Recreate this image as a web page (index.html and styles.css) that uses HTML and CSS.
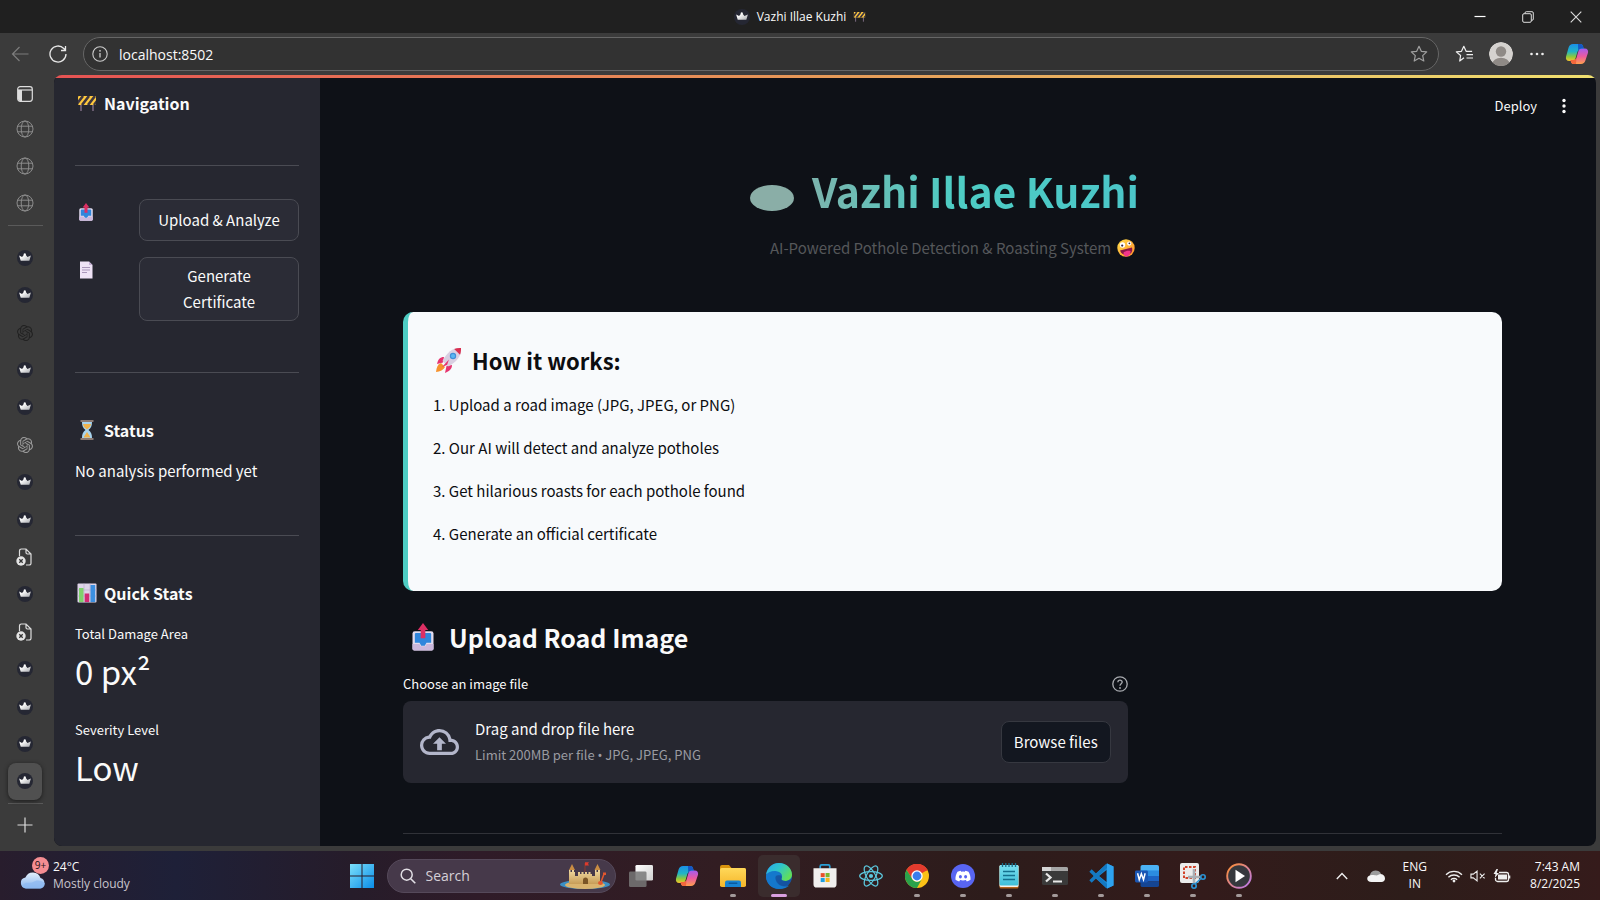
FILE: index.html
```html
<!DOCTYPE html>
<html lang="en">
<head>
<meta charset="utf-8">
<title>Vazhi Illae Kuzhi</title>
<link rel="stylesheet" href="styles.css">
</head>
<body>
<svg class="defs" aria-hidden="true">
  <defs>
    <linearGradient id="g-crown" x1="0" y1="0" x2="1" y2="1"><stop offset="0.3" stop-color="#fff"/><stop offset="1" stop-color="#a9abb0"/></linearGradient>
    <linearGradient id="g-copA" x1="0" y1="0" x2="0" y2="1"><stop offset="0" stop-color="#1a8fe8"/><stop offset="0.45" stop-color="#21b5c4"/><stop offset="0.75" stop-color="#8fc93a"/><stop offset="1" stop-color="#f5c52c"/></linearGradient>
    <linearGradient id="g-copB" x1="0" y1="0" x2="0" y2="1"><stop offset="0" stop-color="#a35cf0"/><stop offset="0.5" stop-color="#ea5aa0"/><stop offset="1" stop-color="#ffa04d"/></linearGradient>
    <linearGradient id="g-win" x1="0" y1="0" x2="1" y2="1"><stop offset="0" stop-color="#7ce0fb"/><stop offset="1" stop-color="#0a8de8"/></linearGradient>
    <linearGradient id="g-folder" x1="0" y1="0" x2="0" y2="1"><stop offset="0" stop-color="#ffd85a"/><stop offset="1" stop-color="#f5b62a"/></linearGradient>
    <linearGradient id="g-edgeA" x1="0" y1="0" x2="1" y2="0.6"><stop offset="0" stop-color="#2aa9ee"/><stop offset="0.5" stop-color="#2fc6c9"/><stop offset="1" stop-color="#62df58"/></linearGradient>
    <linearGradient id="g-edgeB" x1="0" y1="0" x2="1" y2="1"><stop offset="0" stop-color="#1b8fdf"/><stop offset="1" stop-color="#0f4fa0"/></linearGradient>
    <linearGradient id="g-media" x1="0" y1="0" x2="1" y2="1"><stop offset="0" stop-color="#ff8f2e"/><stop offset="1" stop-color="#b879f2"/></linearGradient>
    <linearGradient id="g-face" x1="0" y1="0" x2="1" y2="1"><stop offset="0" stop-color="#ffe04a"/><stop offset="1" stop-color="#ff8a2a"/></linearGradient>
    <linearGradient id="g-cloud" x1="0" y1="0" x2="0" y2="1"><stop offset="0" stop-color="#e3effc"/><stop offset="1" stop-color="#86b4ee"/></linearGradient>
    <linearGradient id="g-note" x1="0" y1="0" x2="0" y2="1"><stop offset="0" stop-color="#7adff0"/><stop offset="1" stop-color="#3fbfd8"/></linearGradient>
    <linearGradient id="g-task" x1="0" y1="0" x2="1" y2="1"><stop offset="0" stop-color="#fff"/><stop offset="1" stop-color="#cfcfcf"/></linearGradient>
    <linearGradient id="g-sand" x1="0" y1="0" x2="0" y2="1"><stop offset="0" stop-color="#f0d9a0"/><stop offset="1" stop-color="#c79d58"/></linearGradient>
    <clipPath id="c-board"><rect x="1" y="2" width="18" height="9" rx="1"/></clipPath>
    <clipPath id="c-avatar"><circle cx="12" cy="12" r="12"/></clipPath>
  </defs>
  <symbol id="i-crown" viewBox="0 0 18 18"><circle cx="9" cy="9" r="9" fill="#252733"/><path d="M2.4 6.2 5.7 8 7.6 5.6a1.3 1.3 0 1 1 2.3 0L11.8 8l3.8-1.8-1.7 6H4.2z" fill="url(#g-crown)"/></symbol>
  <symbol id="i-globe" viewBox="0 0 18 18"><g fill="none" stroke="#8c8c8c" stroke-width="1"><circle cx="9" cy="9" r="8"/><ellipse cx="9" cy="9" rx="3.8" ry="8"/><path d="M1.6 6.2h14.8M1.6 11.8h14.8"/></g></symbol>
  <symbol id="i-knot" viewBox="0 0 24 24"><path fill="currentColor" d="M22.2819 9.8211a5.9847 5.9847 0 0 0-.5157-4.9108 6.0462 6.0462 0 0 0-6.5098-2.9A6.0651 6.0651 0 0 0 4.9807 4.1818a5.9847 5.9847 0 0 0-3.9977 2.9 6.0462 6.0462 0 0 0 .7427 7.0966 5.98 5.98 0 0 0 .511 4.9107 6.051 6.051 0 0 0 6.5146 2.9001A5.9847 5.9847 0 0 0 13.2599 24a6.0557 6.0557 0 0 0 5.7718-4.2058 5.9894 5.9894 0 0 0 3.9977-2.9001 6.0557 6.0557 0 0 0-.7475-7.0729zm-9.022 12.6081a4.4755 4.4755 0 0 1-2.8764-1.0408l.1419-.0804 4.7783-2.7582a.7948.7948 0 0 0 .3927-.6813v-6.7369l2.02 1.1686a.071.071 0 0 1 .038.052v5.5826a4.504 4.504 0 0 1-4.4945 4.4944zm-9.6607-4.1254a4.4708 4.4708 0 0 1-.5346-3.0137l.142.0852 4.783 2.7582a.7712.7712 0 0 0 .7806 0l5.8428-3.3685v2.3324a.0804.0804 0 0 1-.0332.0615L9.74 19.9502a4.4992 4.4992 0 0 1-6.1408-1.6464zM2.3408 7.8956a4.485 4.485 0 0 1 2.3655-1.9728V11.6a.7664.7664 0 0 0 .3879.6765l5.8144 3.3543-2.0201 1.1685a.0757.0757 0 0 1-.071 0l-4.8303-2.7865A4.504 4.504 0 0 1 2.3408 7.872zm16.5963 3.8558L13.1038 8.364 15.1192 7.2a.0757.0757 0 0 1 .071 0l4.8303 2.7913a4.4944 4.4944 0 0 1-.6765 8.1042v-5.6772a.79.79 0 0 0-.407-.667zm2.0107-3.0231l-.142-.0852-4.7735-2.7818a.7759.7759 0 0 0-.7854 0L9.409 9.2297V6.8974a.0662.0662 0 0 1 .0284-.0615l4.8303-2.7866a4.4992 4.4992 0 0 1 6.6802 4.66zM8.3065 12.863l-2.02-1.1638a.0804.0804 0 0 1-.038-.0567V6.0742a4.4992 4.4992 0 0 1 7.3757-3.4537l-.142.0805L8.704 5.459a.7948.7948 0 0 0-.3927.6813zm1.0976-2.3654l2.602-1.4998 2.6069 1.4998v2.9994l-2.5974 1.4997-2.6067-1.4997Z"/></symbol>
  <symbol id="i-badfile" viewBox="0 0 18 18"><path d="M3.5 8V2.8A1.8 1.8 0 0 1 5.300 1H10l5 5v9.200A1.800 1.800 0 0 1 13.200 17H10M10 1v3.500A1.500 1.500 0 0 0 11.500 6H15" fill="none" stroke="#dedede" stroke-width="1.2"/><circle cx="5" cy="13" r="4.700" fill="#e4e4e4"/><path d="m3.300 11.300 3.400 3.400m0-3.400-3.400 3.400" stroke="#333" stroke-width="1.300"/></symbol>
  <symbol id="i-panel" viewBox="0 0 16 16"><rect x="0.700" y="0.700" width="14.600" height="14.600" rx="2.500" fill="none" stroke="#dedede" stroke-width="1.200"/><path d="M1 4h14" stroke="#dedede" stroke-width="1.200"/><path d="M1 4h4v11H3a2 2 0 0 1-2-2z" fill="#dedede"/></symbol>
  <symbol id="i-plus" viewBox="0 0 16 16"><path d="M8 .5v15M.5 8h15" stroke="#ddd" stroke-width="1.200"/></symbol>
  <symbol id="i-back" viewBox="0 0 18 18"><path d="M17.500 9H1.500M8.500 2l-7 7 7 7" fill="none" stroke="#7d7d7d" stroke-width="1.200"/></symbol>
  <symbol id="i-reload" viewBox="0 0 18 18"><path d="M17 9A8 8 0 1 1 14.800 3.500L16.500 5.300M16.500 1v4.500H12" fill="none" stroke="#e8e8e8" stroke-width="1.300"/></symbol>
  <symbol id="i-info" viewBox="0 0 16 16"><circle cx="8" cy="8" r="7.200" fill="none" stroke="#ccc" stroke-width="1.100"/><path d="M8 7v4.500" stroke="#ccc" stroke-width="1.300"/><circle cx="8" cy="4.800" r="0.900" fill="#ccc"/></symbol>
  <symbol id="i-star" viewBox="0 0 18 18"><path d="m9 1.300 2.300 5 5.400.6-4 3.700 1.100 5.400L9 13.300 4.200 16l1.100-5.400-4-3.700 5.400-.6z" fill="none" stroke="#a0a0a0" stroke-width="1.200" stroke-linejoin="round"/></symbol>
  <symbol id="i-favs" viewBox="0 0 18 18"><path d="M9 12.800 4.700 16l.9-5.500-4.300-3.600 5.200-.6L8.800 1.300l2.300 5h6M11.500 9.700H18M11.500 13H18" fill="none" stroke="#eee" stroke-width="1.200" stroke-linejoin="round"/></symbol>
  <symbol id="i-avatar" viewBox="0 0 24 24"><g clip-path="url(#c-avatar)"><circle cx="12" cy="12" r="12" fill="#d5d2cf"/><circle cx="12" cy="9.500" r="5.200" fill="#8f8a86"/><ellipse cx="12" cy="22" rx="8.500" ry="6.200" fill="#8f8a86"/></g></symbol>
  <symbol id="i-copilot" viewBox="0 0 24 24"><path d="M8 2h7.500c1.500 0 2.200 1 2.600 2.400L19 8h-4c-1.500 0-2.300.8-2.700 2.200L10.600 16c-.6 2-1.500 3-3.300 3H4.200C1.700 19 .5 17.300 1 14.700L3.600 5.500C4.300 3.200 5.700 2 8 2z" fill="url(#g-copA)"/><path d="M16 22H8.500c-1.500 0-2.200-1-2.600-2.400L5.500 18h3.300c1.500 0 2.300-.8 2.700-2.200L13.300 9.500c.6-2 1.700-3 3.500-3h3c2.500 0 3.700 1.700 3.200 4.300l-2.600 7.700C19.700 20.800 18.300 22 16 22z" fill="url(#g-copB)"/><path d="M13 2h2.500c1.500 0 2.200 1 2.600 2.400l.6 2.100h-2c-2 0-3 .8-3.500 2.800z" fill="#1657c4"/><path d="M5.500 18h3.300c1.500 0 2.300-.8 2.700-2.200L11 22H8.500c-1.500 0-2.200-1-2.600-2.400z" fill="#f4683c"/></symbol>
  <symbol id="i-barrier" viewBox="0 0 20 18"><path d="M4 9v8M16 9v8" stroke="#85728a" stroke-width="1.400"/><g clip-path="url(#c-board)"><rect x="1" y="2" width="18" height="9" fill="#ffc93d"/><path d="M-1 11 6 2M5 11l7-9M11 11l7-9M17 11l7-9" stroke="#3d3640" stroke-width="2.600"/></g></symbol>
  <symbol id="i-outbox" viewBox="0 0 20 24"><path d="M3 7h14a2 2 0 0 1 2 2v13a1.500 1.500 0 0 1-1.500 1.500h-15A1.500 1.500 0 0 1 1 22V9a2 2 0 0 1 2-2z" fill="#e2dcee"/><path d="M4 8.500h12a1 1 0 0 1 1 1V17h-4l-1.500 2.500h-3L7 17H3V9.500a1 1 0 0 1 1-1z" fill="#2f86dc"/><path d="M1 18h6l1 2h4l1-2h6v4a1.500 1.500 0 0 1-1.500 1.500h-15A1.500 1.500 0 0 1 1 22z" fill="#cbb8dc"/><path d="M10 0 5.500 6H8v7h4V6h2.500z" fill="#dc2f63"/></symbol>
  <symbol id="i-page" viewBox="0 0 14 18"><path d="M1 .5h9L13.500 4v13.500H1z" fill="#eee2f5"/><path d="M10 .5 13.500 4H10z" fill="#c4b0d4"/><path d="M3 6.500h8M3 9h8M3 11.500h5" stroke="#a996ba" stroke-width="1"/></symbol>
  <symbol id="i-glass" viewBox="0 0 16 20"><path d="M3 2h10c0 4-1 6-3.500 8C12 12 13 14 13 18H3c0-4 1-6 3.500-8C4 8 3 6 3 2z" fill="#a9d4ee"/><path d="M4 4h8c-.4 2.500-2 4-4 5.500C6 8 4.400 6.500 4 4zM8 12l3 4.500v1H5v-1z" fill="#f0b34d"/><path d="M1.500 1h13M1.500 19h13" stroke="#8c7a72" stroke-width="2"/></symbol>
  <symbol id="i-chart" viewBox="0 0 20 20"><rect x="0.500" y="0.500" width="19" height="19" rx="1" fill="#ded5e8"/><path d="M.5 7h19M.5 13h19M7 .5v19M13 .5v19" stroke="#baaacb" stroke-width="0.600"/><rect x="2" y="5" width="4.500" height="14" fill="#7fd26b"/><rect x="7.700" y="10.500" width="4.500" height="8.500" fill="#d22c73"/><rect x="13.500" y="2" width="4.700" height="17" fill="#3c8fe0"/></symbol>
  <symbol id="i-rocket" viewBox="0 0 26 26"><path d="M5 16c-3 1-4.500 4-5 9 4-.3 7.500-2 9-5z" fill="#f7922d"/><path d="M8 10c-4 0-6 2.500-7 7l6-1.500zM16 18c0 4-2.500 6-7 8l1.500-7z" fill="#e63470"/><path d="M25 1c-8-.5-14 4-18.500 13L12 19.500C21 15 25.500 9 25 1z" fill="#d9cfe2"/><path d="M25 1c-2.500-.2-4.700.2-6.800 1l5.800 5.800c.8-2.100 1.100-4.300 1-6.800z" fill="#d92f50"/><circle cx="17" cy="9" r="3.200" fill="#3f8fd8"/><circle cx="17" cy="9" r="2" fill="#5ab6f2"/><path d="M13 12.500 6 20l5-2z" fill="#e63470"/></symbol>
  <symbol id="i-zany" viewBox="0 0 18 18"><circle cx="9" cy="9" r="8.700" fill="url(#g-face)"/><circle cx="5.500" cy="6" r="2.700" fill="#fff"/><circle cx="5.200" cy="6.600" r="1.100" fill="#3a2740"/><circle cx="12.200" cy="4.600" r="2.100" fill="#fff"/><circle cx="12.400" cy="4.300" r="0.900" fill="#3a2740"/><path d="M3 11.500 15 8.500c1.200 4.500-1.700 7-4.500 7.500S4.500 15.500 3 11.500z" fill="#8a1648"/><path d="M6.500 13.500c2-1.700 5-2.300 7-1.500.2 3-1.500 5.300-3.800 5.600-1.900.1-3.200-1.600-3.200-4.100z" fill="#f2358a"/></symbol>
  <symbol id="i-upload" viewBox="0 0 24 16"><path d="M19.350 6.040A7.490 7.490 0 0 0 12 0C9.110 0 6.600 1.640 5.350 4.040A5.994 5.994 0 0 0 0 10c0 3.310 2.690 6 6 6h13c2.760 0 5-2.240 5-5 0-2.640-2.050-4.780-4.650-4.960zM19 14H6c-2.210 0-4-1.790-4-4s1.790-4 4-4h.71C7.370 3.690 9.480 2 12 2c3.040 0 5.500 2.460 5.500 5.500V8H19c1.660 0 3 1.340 3 3s-1.340 3-3 3zM8 9h2.550v4h2.900V9H16l-4-4z" fill="#b3b6ca"/></symbol>
  <symbol id="i-help" viewBox="0 0 16 16"><circle cx="8" cy="8" r="7.200" fill="none" stroke="#a9abb0" stroke-width="1.300"/><path d="M5.900 6.300c0-2.800 4.300-2.700 4.300-.2C10.200 7.800 8 7.800 8 9.800" fill="none" stroke="#a9abb0" stroke-width="1.300"/><circle cx="8" cy="12" r="0.900" fill="#a9abb0"/></symbol>
  <symbol id="i-weather" viewBox="0 0 26 18"><path d="M6 17.500a5.500 5.500 0 0 1-.6-10.900A8 8 0 0 1 20.500 7 5.400 5.400 0 0 1 20 17.500z" fill="url(#g-cloud)"/><path d="M3 13.500c4-3.500 7-.5 10-2.500s7-2.500 12 1c0 3-2 5.500-5 5.500H6c-1.500 0-3-1.500-3-4z" fill="#8db9f2" opacity=".7"/></symbol>
  <symbol id="i-windows" viewBox="0 0 24 24"><path d="M0 0h11.500v11.500H0zM12.500 0H24v11.500H12.500zM0 12.500h11.500V24H0zM12.500 12.500H24V24H12.500z" fill="url(#g-win)"/></symbol>
  <symbol id="i-search" viewBox="0 0 16 16"><circle cx="6.700" cy="6.700" r="5.500" fill="none" stroke="#e2dfe5" stroke-width="1.500"/><path d="m10.700 10.700 4.600 4.600" stroke="#e2dfe5" stroke-width="1.600"/></symbol>
  <symbol id="i-castle" viewBox="0 0 50 28"><ellipse cx="25" cy="22.500" rx="25" ry="4.500" fill="#3c8fc4"/><ellipse cx="25" cy="23" rx="20" ry="4" fill="#d9b36e"/><path d="M9 22V8h1.500v2H12V8h2v2h1v4h3v-4h2v2h1.500v-2h2v2H25v-2h2v2h1.500v-2h2v2H32v2h3V8h1.500v2H38V8h2v14z" fill="url(#g-sand)"/><path d="m9 8 3-6 3 6zM34.500 8l3-6 3 6z" fill="#c98d43"/><path d="M23 22v-4a2.500 2.500 0 0 1 5 0v4z" fill="#7a5526"/><path d="M25 10V1" stroke="#9a3a2a" stroke-width=".8"/><path d="M25 .3h4l-1 1.500 1 1.700h-4z" fill="#dd3b2c"/><path d="m44 12-3 8" stroke="#e2572e" stroke-width="1.500"/><ellipse cx="40.500" cy="21" rx="2.500" ry="2" fill="#e2572e"/><path d="M43 10.500h3v2.500h-3z" fill="#e2572e"/></symbol>
  <symbol id="i-taskview" viewBox="0 0 26 24"><rect x="7" y="0" width="19" height="17" rx="1.500" fill="url(#g-task)"/><rect x="0" y="7" width="19" height="17" rx="1.500" fill="#777" opacity=".85"/></symbol>
  <symbol id="i-folder" viewBox="0 0 26 24"><path d="M0 3a2 2 0 0 1 2-2h7l2.500 3H24a2 2 0 0 1 2 2v4H0z" fill="#d9930d"/><rect x="0" y="4" width="26" height="19" rx="1.800" fill="url(#g-folder)"/><path d="M5 23v-4.500a2 2 0 0 1 2-2h12a2 2 0 0 1 2 2V23z" fill="#1783d1"/><rect x="8.500" y="18.500" width="9" height="1.600" rx=".8" fill="#0b5a9e"/></symbol>
  <symbol id="i-edge" viewBox="0 0 26 26"><circle cx="13" cy="13" r="13" fill="url(#g-edgeB)"/><path d="M.2 11.500C1.200 4.800 6.600 0 13 0c7.500 0 13 5.500 13 11.500 0 4-3 6.500-6.500 6.500-3 0-4.500-1.200-4-2.500 1.200-1.800 1-6.500-5-7.300C6 7.700 2 9 .2 11.500z" fill="url(#g-edgeA)"/><path d="M9 14c0 5.500 4.500 9.500 9.500 9.500 2.200 0 4-.7 5.300-1.600C21.500 24.500 17.500 26 13 26 6 26 1 21 .1 14.500.5 10.500 4.500 8.200 9 8.500c3.500.3 5.500 2.200 5.500 4.300-3-1.500-5.500-.8-5.500 1.200z" fill="#1478cc"/><path d="M15.500 15.500c-.5 1.300 1 2.500 4 2.500 1.800 0 3.400-.6 4.600-1.700l.9 1.300c-2 4-5 5.500-7.500 5.300C12.500 22.500 9.500 18 9.500 14.500c.2-2 2-2.700 4.500-2.200 1.500.4 2 2.200 1.500 3.200z" fill="#154f9c" opacity=".75"/></symbol>
  <symbol id="i-store" viewBox="0 0 24 25"><path d="M7 5V2.500A1.500 1.500 0 0 1 8.500 1h7A1.500 1.500 0 0 1 17 2.500V5" fill="none" stroke="#2a9fd6" stroke-width="1.800"/><path d="M0 4.500h24V21a3.500 3.500 0 0 1-3.500 3.500h-17A3.500 3.500 0 0 1 0 21z" fill="#f1efee"/><path d="M7.500 9.500h4.200v4.200H7.500z" fill="#e8502a"/><path d="M12.600 9.500h4.200v4.200h-4.200z" fill="#7bb52e"/><path d="M7.500 14.600h4.200v4.200H7.500z" fill="#1e9fe0"/><path d="M12.600 14.600h4.200v4.200h-4.200z" fill="#f7b51c"/></symbol>
  <symbol id="i-react" viewBox="0 0 24 24"><g fill="none" stroke="#5cc8de" stroke-width="1.200"><ellipse cx="12" cy="12" rx="11.300" ry="4.400"/><ellipse cx="12" cy="12" rx="11.300" ry="4.400" transform="rotate(60 12 12)"/><ellipse cx="12" cy="12" rx="11.300" ry="4.400" transform="rotate(120 12 12)"/></g><circle cx="12" cy="12" r="2.100" fill="#5cc8de"/></symbol>
  <symbol id="i-chrome" viewBox="0 0 24 24"><circle cx="12" cy="12" r="12" fill="#fbc116"/><path d="M12 12 1.600 6A12 12 0 0 1 22.400 6z" fill="#e33b2e"/><path d="M12 6.500h10.700A12 12 0 0 0 1.600 6l5.600 9z" fill="#e33b2e"/><path d="M1.600 6A12 12 0 0 0 12 24l5-9.300a5.500 5.500 0 0 1-9.800 0z" fill="#2aa24b"/><circle cx="12" cy="12" r="5.700" fill="#fff"/><circle cx="12" cy="12" r="4.400" fill="#3b7ded"/></symbol>
  <symbol id="i-discord" viewBox="0 0 24 24"><circle cx="12" cy="12" r="12" fill="#5865f2"/><path d="M9.700 6.700c-1.300.2-2.300.5-3.200 1C4.900 10.200 4.300 13 4.500 15.800c1.200.9 2.400 1.400 3.700 1.700l.9-1.500c1.900.6 3.900.6 5.800 0l.9 1.500c1.300-.3 2.500-.8 3.700-1.700.2-2.800-.4-5.600-2-8.100-.9-.5-1.900-.8-3.200-1l-.5 1a12 12 0 0 0-3.600 0z" fill="#fff"/><ellipse cx="9.400" cy="12.700" rx="1.500" ry="1.700" fill="#5865f2"/><ellipse cx="14.600" cy="12.700" rx="1.500" ry="1.700" fill="#5865f2"/></symbol>
  <symbol id="i-notepad" viewBox="0 0 20 26"><rect x="0.500" y="2" width="19" height="23.500" rx="1.500" fill="#b5651c"/><rect x="0.500" y="2" width="19" height="22" rx="1.500" fill="#f5f1ea"/><rect x="0.500" y="2" width="19" height="20.500" rx="1.500" fill="url(#g-note)"/><path d="M3.500 0v4M6.800 0v4M10 0v4M13.200 0v4M16.500 0v4" stroke="#1a6f8c" stroke-width="1.300"/><path d="M4 8.500h12M4 12.500h12M4 16.500h12" stroke="#14708e" stroke-width="1.500"/></symbol>
  <symbol id="i-terminal" viewBox="0 0 26 18"><rect width="26" height="18" rx="1.500" fill="#3a3a3a"/><path d="M1.500 0h23A1.500 1.500 0 0 1 26 1.500V4H0V1.500A1.500 1.500 0 0 1 1.500 0z" fill="#a5a5a5"/><path d="M0 0h9v4H0z" fill="#d5d5d5"/><path d="m4 6.500 4.500 4L4 14.500" fill="none" stroke="#e8e8e8" stroke-width="2.300"/><path d="M11 14.500h9" stroke="#e8e8e8" stroke-width="2"/></symbol>
  <symbol id="i-vscode" viewBox="0 0 26 26"><path d="M19 .5 25.500 3.500v19L19 25.500 5 13z" fill="#1b8ad6"/><path d="M18.500 7v12L11 13z" fill="#2f1c20"/><path d="m2.500 7.500 17 16.500M2.500 18.500 19.500 2" stroke="#1479c2" stroke-width="3.400"/><path d="M19 .5 25.500 3.500v19L19 25.500z" fill="#2ea3f0"/></symbol>
  <symbol id="i-word" viewBox="0 0 26 24"><path d="M8 0h16a2 2 0 0 1 2 2v5H6V2a2 2 0 0 1 2-2z" fill="#4bb2f5"/><path d="M6 6h20v6H6z" fill="#2b8ce0"/><path d="M6 12h20v6H6z" fill="#1c63c4"/><path d="M6 18h20v4a2 2 0 0 1-2 2H8a2 2 0 0 1-2-2z" fill="#154593"/><rect y="6" width="14" height="13" rx="1.500" fill="#1a56b4"/><path d="m2.800 9 1.800 7 2.300-6.500L9.200 16 11 9" fill="none" stroke="#fff" stroke-width="1.600"/></symbol>
  <symbol id="i-snip" viewBox="0 0 26 26"><rect width="19" height="20" rx="2" fill="#ececec"/><path d="M4 15V4h11v11z" fill="none" stroke="#d2452c" stroke-width="2" stroke-dasharray="2.500 1.500"/><path d="M14 6v14M8 14h13" stroke="#a9afb5" stroke-width="2.600"/><circle cx="23" cy="14" r="2.200" fill="none" stroke="#2b94d6" stroke-width="1.600"/><circle cx="14" cy="23" r="2.200" fill="none" stroke="#2b94d6" stroke-width="1.600"/><path d="m15 21 6-5.500" stroke="#2b94d6" stroke-width="1.600"/></symbol>
  <symbol id="i-media" viewBox="0 0 26 26"><circle cx="13" cy="13" r="11.800" fill="#36383d" stroke="url(#g-media)" stroke-width="1.900"/><path d="M9.500 6.800v12.400L19 13z" fill="#fff"/></symbol>
  <symbol id="i-chevron" viewBox="0 0 12 8"><path d="m.8 7 5.200-5.500L11.200 7" fill="none" stroke="#eee" stroke-width="1.400"/></symbol>
  <symbol id="i-onedrive" viewBox="0 0 18 12"><path d="M3 8C2 3.500 5 .5 8.500.5c2.500 0 4.500 1 5.500 3.300L10 8z" fill="#9c9c9c"/><path d="M4.500 12C-1 12-1 6 3.500 5.200 8 4.700 9 6 11 5c4-2.500 7 .5 7 3.500 0 2-1.500 3.500-3.500 3.500z" fill="#f4f4f4"/></symbol>
  <symbol id="i-wifi" viewBox="0 0 18 13"><g fill="none" stroke="#eee" stroke-width="1.300"><path d="M1 5.200a11.500 11.500 0 0 1 16 0M3.400 7.800a8 8 0 0 1 11.200 0M5.900 10.200a4.500 4.500 0 0 1 6.200 0"/></g><circle cx="9" cy="11.500" r="1.400" fill="#eee"/></symbol>
  <symbol id="i-mute" viewBox="0 0 17 12"><path d="M1 4h2.500L7.500.8v10.400L3.500 8H1zM10.500 3.500l5 5m0-5-5 5" fill="none" stroke="#eee" stroke-width="1.200"/></symbol>
  <symbol id="i-battery" viewBox="0 0 18 14"><path d="M6 3.500h7.500A2 2 0 0 1 15.500 5.500v5a2 2 0 0 1-2 2h-9a2 2 0 0 1-2-2V9" fill="none" stroke="#eee" stroke-width="1.300"/><rect x="5" y="5.500" width="9" height="5" fill="#eee"/><path d="M16.500 6.500v3" stroke="#eee" stroke-width="1.600"/><path d="M3.500 0 .5 5h2l-.7 4L6 4H3.700L5 0z" fill="#eee"/></symbol>
</svg>

<div class="desktop">
  <header class="titlebar">
    <div class="window-title"><svg class="s16"><use href="#i-crown"/></svg><span>Vazhi Illae Kuzhi</span><svg class="s13"><use href="#i-barrier"/></svg></div>
    <div class="window-buttons">
      <button aria-label="Minimize"><svg class="s12" viewBox="0 0 12 12"><path d="M.5 5.500h11" stroke="#fff" stroke-width="1.200"/></svg></button>
      <button aria-label="Restore"><svg class="s12" viewBox="0 0 12 12"><path d="M3 2.500V2A1.300 1.300 0 0 1 4.300.7H10A1.300 1.300 0 0 1 11.300 2v6A1.300 1.300 0 0 1 10 9.300h-.5M.7 4A1.300 1.300 0 0 1 2 2.700h6A1.300 1.300 0 0 1 9.300 4v6A1.300 1.300 0 0 1 8 11.300H2A1.300 1.300 0 0 1 .7 10z" fill="none" stroke="#ddd"/></svg></button>
      <button aria-label="Close"><svg class="s12" viewBox="0 0 12 12"><path d="m.7.700 10.600 10.600M11.300.7.700 11.300" stroke="#ddd" stroke-width="1.100"/></svg></button>
    </div>
  </header>

  <div class="toolbar">
    <button aria-label="Back"><svg class="s18"><use href="#i-back"/></svg></button>
    <button aria-label="Reload"><svg class="s18"><use href="#i-reload"/></svg></button>
    <div class="address">
      <svg class="s16"><use href="#i-info"/></svg>
      <input type="text" aria-label="Address" value="localhost:8502">
      <button aria-label="Add to favorites"><svg class="s18"><use href="#i-star"/></svg></button>
    </div>
    <div class="tools">
      <button aria-label="Favorites"><svg class="s18"><use href="#i-favs"/></svg></button>
      <button aria-label="Profile"><svg class="s24"><use href="#i-avatar"/></svg></button>
      <button aria-label="More"><svg class="s16" viewBox="0 0 16 16"><g fill="#eee"><circle cx="2.500" cy="8" r="1.300"/><circle cx="8" cy="8" r="1.300"/><circle cx="13.500" cy="8" r="1.300"/></g></svg></button>
      <button aria-label="Copilot"><svg class="s24"><use href="#i-copilot"/></svg></button>
    </div>
  </div>

  <div class="workspace">
    <nav class="rail" aria-label="Tabs">
      <button class="rail-top" aria-label="Tab menu"><svg class="s16"><use href="#i-panel"/></svg></button>
      <div class="pinned">
        <button aria-label="Pinned tab 1"><svg class="s18"><use href="#i-globe"/></svg></button>
        <button aria-label="Pinned tab 2"><svg class="s18"><use href="#i-globe"/></svg></button>
        <button aria-label="Pinned tab 3"><svg class="s18"><use href="#i-globe"/></svg></button>
      </div>
      <div class="tabs">
        <button aria-label="Tab 1"><svg class="s16"><use href="#i-crown"/></svg></button>
        <button aria-label="Tab 2"><svg class="s16"><use href="#i-crown"/></svg></button>
        <button class="dark" aria-label="Tab 3"><svg class="s16"><use href="#i-knot"/></svg></button>
        <button aria-label="Tab 4"><svg class="s16"><use href="#i-crown"/></svg></button>
        <button aria-label="Tab 5"><svg class="s16"><use href="#i-crown"/></svg></button>
        <button class="light" aria-label="Tab 6"><svg class="s16"><use href="#i-knot"/></svg></button>
        <button aria-label="Tab 7"><svg class="s16"><use href="#i-crown"/></svg></button>
        <button aria-label="Tab 8"><svg class="s16"><use href="#i-crown"/></svg></button>
        <button aria-label="Tab 9"><svg class="s18"><use href="#i-badfile"/></svg></button>
        <button aria-label="Tab 10"><svg class="s16"><use href="#i-crown"/></svg></button>
        <button aria-label="Tab 11"><svg class="s18"><use href="#i-badfile"/></svg></button>
        <button aria-label="Tab 12"><svg class="s16"><use href="#i-crown"/></svg></button>
        <button aria-label="Tab 13"><svg class="s16"><use href="#i-crown"/></svg></button>
        <button aria-label="Tab 14"><svg class="s16"><use href="#i-crown"/></svg></button>
        <button class="current" aria-label="Tab 15"><svg class="s16"><use href="#i-crown"/></svg></button>
      </div>
      <button class="new-tab" aria-label="New tab"><svg class="s16"><use href="#i-plus"/></svg></button>
    </nav>

    <div class="app">
      <aside class="sidebar">
        <h3><svg class="s20"><use href="#i-barrier"/></svg>Navigation</h3>
        <hr>
        <div class="nav-rows">
          <svg class="s18"><use href="#i-outbox"/></svg><button class="btn">Upload &amp; Analyze</button>
          <svg class="s18"><use href="#i-page"/></svg><button class="btn">Generate Certificate</button>
        </div>
        <hr>
        <h3><svg class="s20"><use href="#i-glass"/></svg>Status</h3>
        <p>No analysis performed yet</p>
        <hr>
        <h3><svg class="s20"><use href="#i-chart"/></svg>Quick Stats</h3>
        <dl class="metrics">
          <div><dt>Total Damage Area</dt><dd>0 px²</dd></div>
          <div><dt>Severity Level</dt><dd>Low</dd></div>
        </dl>
      </aside>

      <main class="main">
        <div class="app-bar"><button>Deploy</button><button aria-label="Menu"><svg class="s16" viewBox="0 0 16 16"><g fill="#fafafa"><circle cx="8" cy="2.500" r="1.700"/><circle cx="8" cy="8" r="1.700"/><circle cx="8" cy="13.500" r="1.700"/></g></svg></button></div>
        <div class="content">
          <h1><span class="hole"></span>Vazhi Illae Kuzhi</h1>
          <p class="tagline">AI-Powered Pothole Detection &amp; Roasting System <svg class="s18"><use href="#i-zany"/></svg></p>
          <section class="card">
            <h2><svg class="s26"><use href="#i-rocket"/></svg>How it works:</h2>
            <ol>
              <li>Upload a road image (JPG, JPEG, or PNG)</li>
              <li>Our AI will detect and analyze potholes</li>
              <li>Get hilarious roasts for each pothole found</li>
              <li>Generate an official certificate</li>
            </ol>
          </section>
          <section class="columns">
            <div>
              <h2 class="upload-title"><svg class="s28"><use href="#i-outbox"/></svg>Upload Road Image</h2>
              <div class="field-label"><label for="browse">Choose an image file</label><svg class="s16"><use href="#i-help"/></svg></div>
              <div class="dropzone">
                <svg class="cloud"><use href="#i-upload"/></svg>
                <div class="drop-text"><span>Drag and drop file here</span><small>Limit 200MB per file <span class="bullet">•</span> JPG, JPEG, PNG</small></div>
                <button class="btn browse" id="browse">Browse files</button>
              </div>
            </div>
          </section>
          <hr>
        </div>
      </main>
    </div>
  </div>

  <footer class="taskbar">
    <button class="weather">
      <span class="weather-icon"><svg class="cloudy"><use href="#i-weather"/></svg><span class="badge">9+</span></span>
      <span class="weather-text"><span>24°C</span><span class="soft">Mostly cloudy</span></span>
    </button>
    <div class="dock">
      <button aria-label="Start"><svg class="s24"><use href="#i-windows"/></svg></button>
      <div class="search"><svg class="s16"><use href="#i-search"/></svg><input type="text" aria-label="Search" placeholder="Search"><svg class="castle"><use href="#i-castle"/></svg></div>
      <button aria-label="Task view"><svg class="s24"><use href="#i-taskview"/></svg></button>
      <button aria-label="Copilot"><svg class="s24"><use href="#i-copilot"/></svg></button>
      <button class="open" aria-label="Files"><svg class="s26"><use href="#i-folder"/></svg></button>
      <button class="open focused" aria-label="Edge"><svg class="s26"><use href="#i-edge"/></svg></button>
      <button aria-label="Store"><svg class="s24"><use href="#i-store"/></svg></button>
      <button aria-label="React"><svg class="s24"><use href="#i-react"/></svg></button>
      <button class="open" aria-label="Chrome"><svg class="s24"><use href="#i-chrome"/></svg></button>
      <button class="open" aria-label="Discord"><svg class="s24"><use href="#i-discord"/></svg></button>
      <button class="open" aria-label="Notepad"><svg class="s26"><use href="#i-notepad"/></svg></button>
      <button class="open" aria-label="Terminal"><svg class="s26"><use href="#i-terminal"/></svg></button>
      <button class="open" aria-label="Code"><svg class="s26"><use href="#i-vscode"/></svg></button>
      <button class="open" aria-label="Word"><svg class="s24"><use href="#i-word"/></svg></button>
      <button class="open" aria-label="Snipping Tool"><svg class="s26"><use href="#i-snip"/></svg></button>
      <button class="open" aria-label="Media Player"><svg class="s26"><use href="#i-media"/></svg></button>
    </div>
    <div class="tray">
      <button aria-label="Hidden icons"><svg class="s12"><use href="#i-chevron"/></svg></button>
      <button aria-label="OneDrive"><svg class="s18"><use href="#i-onedrive"/></svg></button>
      <button class="lang"><span>ENG</span><span>IN</span></button>
      <button class="status" aria-label="Network, sound and battery"><svg class="s18"><use href="#i-wifi"/></svg><svg class="s16"><use href="#i-mute"/></svg><svg class="s18"><use href="#i-battery"/></svg></button>
      <button class="clock"><span>7:43 AM</span><span>8/2/2025</span></button>
    </div>
  </footer>
</div>
</body>
</html>
```
FILE: styles.css
```css
* { box-sizing: border-box; }

body {
  margin: 0;
  background: #3b3b3b;
  color: #fafafa;
  font-family: "Open Sans", "Noto Sans", sans-serif;
  font-size: 12px;
}

h1, h2, h3, p, ol, dl, dd { margin: 0; padding: 0; }

svg { display: block; flex: none; }

button {
  display: flex;
  align-items: center;
  justify-content: center;
  padding: 0;
  border: 0;
  background: none;
  color: inherit;
  font: inherit;
}

input {
  flex: 1;
  min-width: 0;
  padding: 0;
  border: 0;
  outline: 0;
  background: none;
  color: inherit;
  font: inherit;
}

hr {
  width: 100%;
  height: 1px;
  margin: 0;
  border: 0;
  background: #4a4b53;
}

.defs { position: absolute; width: 0; height: 0; }
.s12 { width: 12px; height: 12px; }
.s13 { width: 13px; height: 13px; }
.s16 { width: 16px; height: 16px; }
.s18 { width: 18px; height: 18px; }
.s20 { width: 20px; height: 20px; }
.s24 { width: 24px; height: 24px; }
.s26 { width: 26px; height: 26px; }
.s28 { width: 28px; height: 28px; }

.desktop {
  display: grid;
  grid-template-rows: 33px 42px minmax(0, 1fr) 49px;
  height: 100vh;
}

/* Browser chrome */
.titlebar {
  display: grid;
  grid-template-columns: 1fr auto 1fr;
  align-items: center;
  background: #202020;
}
.window-title { grid-column: 2; display: flex; align-items: center; gap: 7px; }
.window-buttons { display: flex; justify-content: flex-end; }
.window-buttons button { width: 48px; height: 33px; }

.toolbar { display: flex; align-items: center; padding: 0 11px; }
.toolbar > button { width: 18px; margin-right: 20px; }
.toolbar > button + button { margin-right: 16px; }
.address {
  flex: 1;
  display: flex;
  align-items: center;
  gap: 11px;
  height: 34px;
  padding: 0 10px 0 8px;
  border: 1px solid #666;
  border-radius: 17px;
  background: #323232;
  font-size: 14px;
}
.tools { display: flex; align-items: center; gap: 16px; margin-left: 16px; }
.tools button:last-child { margin-left: 4px; }

.workspace {
  display: grid;
  grid-template-columns: 54px minmax(0, 1fr);
  padding: 0 4px 5px 0;
}
.rail {
  display: flex;
  flex-direction: column;
  padding: 7px 11px 0 8px;
  min-height: 0;
}
.rail button { width: 34px; }
.rail-top { height: 24px; }
.pinned, .tabs { display: flex; flex-direction: column; border-bottom: 1px solid #5a5a5a; }
.pinned { padding: 4px 0; }
.pinned button { height: 37px; }
.tabs { flex: 1; padding-top: 13px; }
.tabs button { flex: 1; border-radius: 8px; }
.tabs .dark { color: #222; }
.tabs .light { color: #9a9a9a; }
.tabs .current { background: #505050; box-shadow: 0 1px 4px #1c1c1c; margin: 0 0 3px; }
.new-tab { height: 42px; }

/* Web app */
.app {
  display: grid;
  grid-template-columns: 266px minmax(0, 1fr);
  overflow: hidden;
  border-radius: 8px;
  background: linear-gradient(90deg, #e65353, #e69a58 50%, #f0e070) top / 100% 3px no-repeat #0e1117;
  padding-top: 3px;
  font-family: "Noto Sans CJK SC", "Noto Sans", sans-serif;
  font-size: 15px;
  line-height: 26px;
}
.sidebar {
  display: flex;
  flex-direction: column;
  padding: 9px 21px 0;
  background: #262730;
}
.sidebar h3 {
  display: flex;
  align-items: center;
  gap: 7px;
  padding-left: 2px;
  font-size: 16px;
  font-weight: 600;
  line-height: 32px;
}
.sidebar hr { margin: 46px 0 41px; }
.sidebar h3 + hr { margin-bottom: 33px; }
.sidebar p { margin-top: 12px; padding-bottom: 5px; }
.nav-rows {
  display: grid;
  grid-template-columns: 48px minmax(0, 1fr);
  gap: 16px;
  padding-bottom: 5px;
}
.nav-rows svg { margin: 4px 0 0 2px; }
.btn {
  min-height: 42px;
  padding: 5px 12px;
  border: 1px solid #4a4b53;
  border-radius: 8px;
  background: #2b2c36;
  text-align: center;
}
.metrics { display: flex; flex-direction: column; gap: 24px; margin-top: 12px; }
.metrics dt { font-size: 13px; }
.metrics dd { margin-top: 2px; font-size: 33px; line-height: 44px; }

.main { min-width: 0; }
.app-bar {
  display: flex;
  justify-content: flex-end;
  gap: 19px;
  padding: 15px 24px 0 0;
  font-size: 13px;
}
.content { padding: 42px 94px 0 83px; }
.content h1 {
  display: flex;
  align-items: center;
  justify-content: center;
  gap: 18px;
  padding-right: 16px;
  background: linear-gradient(90deg, #ff6b6b, #4ecdc4, #45b7d1);
  background-clip: text;
  color: transparent;
  font-size: 41px;
  font-weight: 700;
  line-height: 58px;
}
.hole { width: 44px; height: 26px; margin-top: 16px; border-radius: 50%; background: #8aaea7; }
.tagline {
  display: flex;
  align-items: center;
  justify-content: center;
  gap: 6px;
  margin-top: 16px;
  color: #55575a;
}
.card {
  margin-top: 51px;
  padding: 30px 26px 27px 25px;
  border-left: 5px solid #4ecdc4;
  border-radius: 10px;
  background: #f8fafc;
  color: #0c0d10;
}
.card h2 {
  display: flex;
  align-items: center;
  gap: 10px;
  padding-left: 3px;
  font-size: 22px;
  font-weight: 600;
  line-height: 36px;
}
.card ol { margin-top: 14px; list-style-position: inside; }
.card li { margin-bottom: 17px; }
.columns { display: grid; grid-template-columns: 2fr 1fr; gap: 12px; margin-top: 26px; }
.upload-title {
  display: flex;
  align-items: center;
  gap: 12px;
  padding-left: 6px;
  font-size: 25px;
  font-weight: 600;
  line-height: 40px;
}
.field-label {
  display: flex;
  align-items: center;
  justify-content: space-between;
  margin-top: 14px;
  font-size: 13px;
}
.dropzone {
  display: flex;
  align-items: center;
  gap: 16px;
  margin: 4px 0 50px;
  padding: 15px 17px;
  border-radius: 8px;
  background: #262730;
}
.cloud { width: 39px; height: 26px; }
.drop-text { flex: 1; display: flex; flex-direction: column; }
.drop-text small { color: #9a9ba1; font-size: 13px; }
.bullet { font-family: "Noto Sans", sans-serif; }
.browse { background: #131720; border-color: #363840; }
.content hr { background: #303238; }

/* Taskbar */
.taskbar {
  display: grid;
  grid-template-columns: minmax(0, 1fr) auto minmax(0, 1fr);
  align-items: center;
  background: linear-gradient(90deg, #281d2d, #1e2038 11%, #261c2a 22%, #2f1b28 30%, #321d22 45%, #2d1c1b 62%, #331b1b 75%, #2d1d1a 88%, #351b1b);
}
.weather { justify-self: start; gap: 7px; padding-left: 20px; text-align: left; }
.weather-icon { position: relative; padding-top: 8px; }
.cloudy { width: 26px; height: 18px; }
.badge {
  position: absolute;
  top: -6px;
  right: -3px;
  width: 17px;
  height: 17px;
  border-radius: 50%;
  background: #f58d92;
  color: #241418;
  font-size: 10px;
  line-height: 17px;
  text-align: center;
}
.weather-text, .lang, .clock { display: flex; flex-direction: column; line-height: 17px; padding-bottom: 2px; }
.soft { color: #c9c5cd; }
.dock { display: flex; align-items: center; }
.dock button { position: relative; width: 46px; height: 42px; border-radius: 5px; }
.dock .open::after {
  content: "";
  position: absolute;
  bottom: 0;
  width: 6px;
  height: 3px;
  border-radius: 2px;
  background: #a39a9a;
}
.dock .focused { width: 42px; margin: 0 2px; background: #3a2c2d; }
.dock .focused::after { width: 16px; background: #d9a0e0; }
.search {
  display: flex;
  align-items: center;
  gap: 10px;
  width: 229px;
  height: 34px;
  margin: 0 2px;
  padding: 0 5px 0 12px;
  border: 1px solid #55495a;
  border-radius: 17px;
  background: #46394a;
  font-size: 14px;
}
.search input::placeholder { color: #d5d0d8; opacity: 1; }
.castle { width: 50px; height: 28px; }
.tray { display: flex; align-items: center; justify-content: flex-end; padding-right: 20px; }
.tray .lang { margin: 0 18px; }
.tray button:nth-child(2) { margin-left: 19px; }
.status { gap: 7px; }
.tray .clock { align-items: flex-end; margin-left: 19px; }
```
